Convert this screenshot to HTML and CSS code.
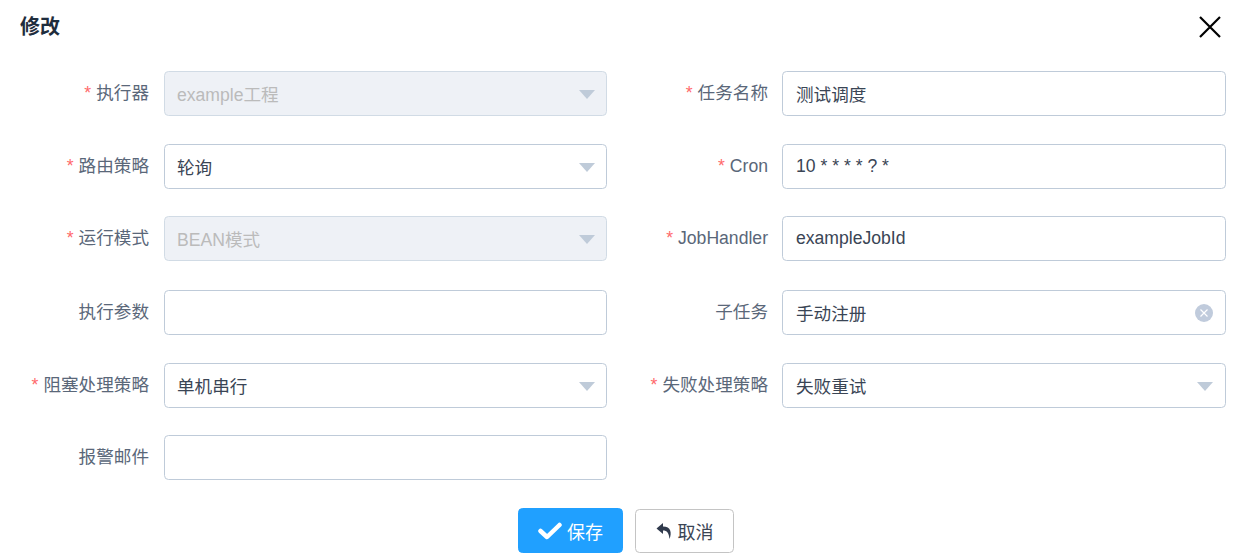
FILE: index.html
```html
<!DOCTYPE html>
<html lang="zh">
<head>
<meta charset="utf-8">
<title>修改</title>
<link rel="stylesheet" href="styles.css">
</head>
<body>
<div class="dialog">
  <header class="head">
    <h2 class="title">修改</h2>
    <button class="close" aria-label="关闭"><svg width="24" height="24" viewBox="0 0 24 24"><path d="M2 2 L22 22 M22 2 L2 22" stroke="#000" stroke-width="2.2" fill="none"/></svg></button>
  </header>
  <form class="form">
    <label class="lab lab-l"><i>*</i>执行器</label>
    <div class="box disabled"><span>example工程</span><svg class="arrow" viewBox="0 0 16 9"><path d="M0 0H16L8 9Z"/></svg></div>
    <label class="lab lab-r"><i>*</i>任务名称</label>
    <div class="box box-r"><span>测试调度</span></div>

    <label class="lab lab-l"><i>*</i>路由策略</label>
    <div class="box"><span>轮询</span><svg class="arrow" viewBox="0 0 16 9"><path d="M0 0H16L8 9Z"/></svg></div>
    <label class="lab lab-r"><i>*</i>Cron</label>
    <div class="box box-r"><span>10 * * * * ? *</span></div>

    <label class="lab lab-l"><i>*</i>运行模式</label>
    <div class="box disabled"><span>BEAN模式</span><svg class="arrow" viewBox="0 0 16 9"><path d="M0 0H16L8 9Z"/></svg></div>
    <label class="lab lab-r"><i>*</i>JobHandler</label>
    <div class="box box-r"><span>exampleJobId</span></div>

    <label class="lab lab-l">执行参数</label>
    <div class="box"></div>
    <label class="lab lab-r">子任务</label>
    <div class="box box-r"><span>手动注册</span><svg class="clear" viewBox="0 0 18 18"><circle cx="9" cy="9" r="9" fill="#c0cbdc"/><path d="M5.5 5.5L12.500 12.500M12.500 5.500L5.500 12.500" stroke="#fff" stroke-width="1.200"/></svg></div>

    <label class="lab lab-l"><i>*</i>阻塞处理策略</label>
    <div class="box"><span>单机串行</span><svg class="arrow" viewBox="0 0 16 9"><path d="M0 0H16L8 9Z"/></svg></div>
    <label class="lab lab-r"><i>*</i>失败处理策略</label>
    <div class="box box-r"><span>失败重试</span><svg class="arrow" viewBox="0 0 16 9"><path d="M0 0H16L8 9Z"/></svg></div>

    <label class="lab lab-l">报警邮件</label>
    <div class="box"></div>
  </form>
  <footer class="foot">
    <button class="btn primary"><svg width="24" height="18" viewBox="0 0 24 18"><path d="M2.500 9L9 15L21.500 3" stroke="#fff" stroke-width="4.500" fill="none" stroke-linecap="round" stroke-linejoin="round"/></svg>保存</button>
    <button class="btn plain"><svg width="16" height="18" viewBox="0 0 16 18"><path d="M7 1L0.500 6.500L7 12V8.500C11 8.500 13 11 13.500 17C16 11 15 4.500 7 4.500Z" fill="#303a4c"/></svg>取消</button>
  </footer>
</div>
</body>
</html>
```
FILE: styles.css
```css
* { box-sizing: border-box; }
html, body { margin: 0; padding: 0; background: #fff; }
body { font-family: "Liberation Sans", "Noto Sans CJK SC", sans-serif; width: 1242px; height: 553px; overflow: hidden; }
.head { display: flex; justify-content: space-between; align-items: center; height: 54px; padding: 0 20px; }
.title { margin: 0; font-size: 20px; font-weight: 700; color: #1f2d3d; line-height: 56px; }
.close { border: 0; background: none; padding: 0; width: 24px; height: 24px; display: block; }
.close svg { display: block; }
.form { display: grid; grid-template-columns: 164px 443px 175px 444px; grid-template-rows: 73px 72px 74px 73px 72px 45px; margin-top: 17px; }
.lab { font-size: 17.6px; color: #5a6779; text-align: right; line-height: 44px; white-space: nowrap; }
.lab-l { padding-right: 15px; }
.lab-r { padding-right: 14px; }
.lab i { font-style: normal; color: #ff6a6c; margin-right: 5px; font-family: "Liberation Sans", sans-serif; }
.box { height: 45px; border: 1px solid #bfcbd9; border-radius: 4.500px; display: flex; align-items: center; justify-content: space-between; padding: 0 11px 0 12px; font-size: 17.6px; color: #3a4555; background: #fff; }
.box-r { padding: 0 12px 0 13px; }
.box.disabled { background: #eef1f6; color: #bbb; border-color: #d1dbe5; }
.arrow { width: 16px; height: 9px; fill: #bfcbd9; margin-top: 1px; }
.clear { width: 18px; height: 18px; }
.foot { display: flex; justify-content: center; align-items: center; gap: 12px; margin-top: 28px; padding-left: 10px; }
.btn { font: inherit; font-size: 18px; border-radius: 4.500px; height: 45px; display: flex; align-items: center; justify-content: center; padding: 0; }
.btn.primary { width: 105px; background: #20a0ff; border: 1px solid #20a0ff; color: #fff; gap: 5px; }
.btn.plain { width: 99px; height: 44px; margin-top: 1px; background: #fff; border: 1px solid #c4c4c4; color: #3a4555; gap: 6px; }
```
